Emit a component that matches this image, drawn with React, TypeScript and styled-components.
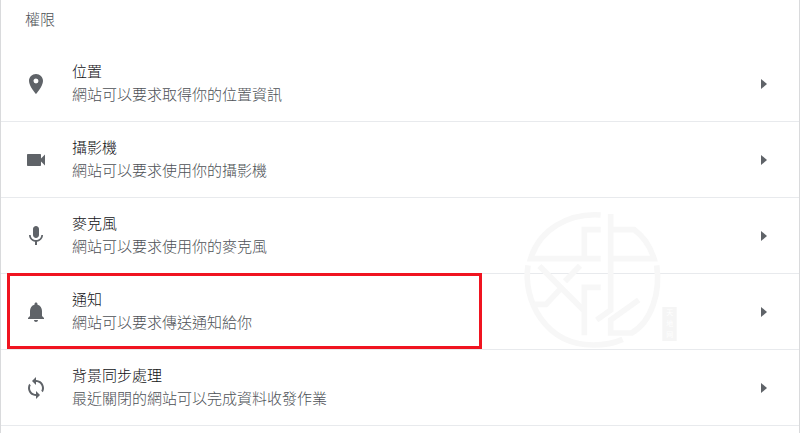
import React from 'react';
import styled, { createGlobalStyle } from 'styled-components';

const GlobalStyle = createGlobalStyle`
  * { box-sizing: border-box; }
  body {
    margin: 0;
    background: #fff;
    font-family: "Noto Sans CJK TC", "Noto Sans", sans-serif;
    font-weight: 300;
    overflow: hidden;
  }
`;

const Panel = styled.main`
  position: relative;
  min-height: 100vh;
  border: solid #d9dadc;
  border-width: 0 1px;
`;

const Heading = styled.h2`
  margin: 0;
  padding: 8px 24px 16px;
  font-size: 15px;
  line-height: 22px;
  font-weight: inherit;
  color: #4d5156;
`;

const List = styled.ul`
  margin: 0;
  padding: 0;
  list-style: none;
`;

const Item = styled.li`
  position: relative;
  border-bottom: 1px solid #e8eaed;
`;

const RowButton = styled.button`
  display: flex;
  align-items: center;
  width: 100%;
  height: 75px;
  padding: 0 23px;
  border: 0;
  background: none;
  font: inherit;
  text-align: left;
  cursor: pointer;
`;

const Glyph = styled.svg`
  flex: none;
  width: 24px;
  height: 24px;
  margin-right: 24px;
  fill: #5f6368;
`;

const Labels = styled.span`
  flex: 1;
  display: flex;
  flex-direction: column;
  padding-bottom: 4px;
  font-size: 15px;
  line-height: 23px;
`;

const Title = styled.span`
  color: #101114;
`;

const Description = styled.span`
  color: #4d5156;
`;

const Arrow = styled.svg`
  flex: none;
  width: 24px;
  height: 24px;
  fill: #5f6368;
`;

const Highlight = styled.span`
  position: absolute;
  inset: -1px auto 0 6px;
  width: 60%;
  max-width: 475px;
  border: 3px solid #f01420;
  pointer-events: none;
`;

const Watermark = styled.svg`
  position: absolute;
  top: 200px;
  right: 109px;
  width: 180px;
  height: 160px;
  pointer-events: none;
`;

const permissions = [
  {
    title: '位置',
    description: '網站可以要求取得你的位置資訊',
    icon: 'M12 2C8.13 2 5 5.13 5 9c0 5.25 7 13 7 13s7-7.75 7-13c0-3.87-3.13-7-7-7zm0 9.5a2.5 2.5 0 0 1 0-5 2.5 2.5 0 0 1 0 5z',
  },
  {
    title: '攝影機',
    description: '網站可以要求使用你的攝影機',
    icon: 'M17 10.5V7c0-.55-.45-1-1-1H4c-.55 0-1 .45-1 1v10c0 .55.45 1 1 1h12c.55 0 1-.45 1-1v-3.5l4 4v-11l-4 4z',
  },
  {
    title: '麥克風',
    description: '網站可以要求使用你的麥克風',
    icon: 'M12 14c1.66 0 2.99-1.34 2.99-3L15 5c0-1.66-1.34-3-3-3S9 3.34 9 5v6c0 1.66 1.34 3 3 3zm5.3-3c0 3-2.54 5.1-5.3 5.1S6.7 14 6.7 11H5c0 3.41 2.72 6.23 6 6.72V21h2v-3.28c3.28-.48 6-3.3 6-6.72h-1.7z',
  },
  {
    title: '通知',
    description: '網站可以要求傳送通知給你',
    icon: 'M12 22c1.1 0 2-.9 2-2h-4c0 1.1.89 2 2 2zm6-6v-5c0-3.07-1.64-5.64-4.5-6.32V4c0-.83-.67-1.5-1.5-1.5s-1.5.67-1.5 1.5v.68C7.63 5.36 6 7.92 6 11v5l-2 2v1h16v-1l-2-2z',
    highlighted: true,
  },
  {
    title: '背景同步處理',
    description: '最近關閉的網站可以完成資料收發作業',
    icon: 'M12 4V1L8 5l4 4V6c3.31 0 6 2.69 6 6 0 1.01-.25 1.97-.7 2.8l1.46 1.46C19.54 15.03 20 13.57 20 12c0-4.42-3.58-8-8-8zm0 14c-3.31 0-6-2.69-6-6 0-1.01.25-1.97.7-2.8L5.24 7.74C4.46 8.97 4 10.43 4 12c0 4.42 3.58 8 8 8v3l4-4-4-4v3z',
  },
];

function Logo() {
  return (
    <Watermark viewBox="0 0 540 480" aria-hidden="true">
      <g fill="none" stroke="#f7f7f7" strokeWidth="17">
        <path d="M272 45C175 38 88 90 62 176H272" />
        <path d="M272 89H223V176M302 42V330L260 360M302 89H373Q415 120 432 176H302" />
        <path d="M54 196C38 300 105 435 250 435Q300 435 338 418" />
        <path d="M440 196C452 275 425 365 365 399H302V360L386 300" />
        <path d="M88 198L220 330M210 197L165 244M152 266L108 313H70M272 262H223V406" />
      </g>
      <rect x="457" y="321" width="43" height="102" fill="#f5f5f5" />
      <g fill="#fff" fontSize="21" fontWeight="400" textAnchor="middle">
        <text x="479" y="346">天</text>
        <text x="479" y="379">地</text>
        <text x="479" y="412">网</text>
      </g>
    </Watermark>
  );
}

export default function App() {
  return (
    <>
      <GlobalStyle />
      <Panel>
        <Heading>權限</Heading>
        <List>
          {permissions.map((item) => (
            <Item key={item.title}>
              <RowButton type="button">
                <Glyph viewBox="0 0 24 24" aria-hidden="true">
                  <path fillRule="evenodd" d={item.icon} />
                </Glyph>
                <Labels>
                  <Title>{item.title}</Title>
                  <Description>{item.description}</Description>
                </Labels>
                <Arrow viewBox="0 0 24 24" aria-hidden="true">
                  <path d="M9 7l6 5-6 5z" />
                </Arrow>
              </RowButton>
              {item.highlighted && <Highlight />}
            </Item>
          ))}
        </List>
        <Logo />
      </Panel>
    </>
  );
}
